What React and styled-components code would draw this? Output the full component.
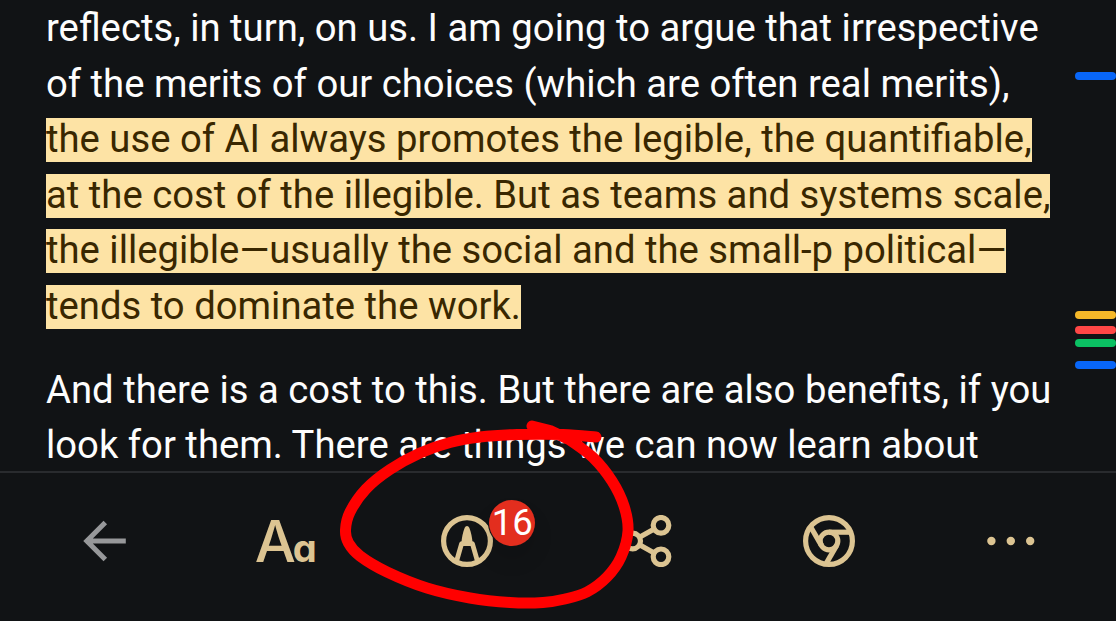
import { Fragment } from "react";
import { styled, createGlobalStyle } from "styled-components";

const GlobalStyle = createGlobalStyle`
  * {
    box-sizing: border-box;
  }

  body {
    margin: 0;
    background-color: #111315;
    overflow: hidden;
  }
`;

const Screen = styled.div`
  position: relative;
  display: flex;
  flex-direction: column;
  width: 1116px;
  height: 621px;
  overflow: hidden;
  background-color: #111315;
  font-family: Roboto, "Liberation Sans", sans-serif;
`;

const Reader = styled.main`
  display: flex;
  height: 471px;
  overflow: hidden;
`;

const Article = styled.article`
  flex: 1;
  padding: 1px 0 0 46px;
`;

const Paragraph = styled.p`
  margin: 0 0 28.2px;
  color: #fdfdfd;
  font-size: 38.26px;
  line-height: 55.6px;
  white-space: nowrap;
`;

const Highlight = styled.mark`
  padding-bottom: 1px;
  background: linear-gradient(transparent 1px, #fde3a5 1px);
  color: #392700;
`;

const Rail = styled.aside`
  width: 41px;
  display: flex;
  flex-direction: column;
`;

const Marker = styled.div`
  flex: none;
  height: 8px;
  margin-top: ${(props) => props.$gap}px;
  border-radius: 4px;
  background-color: ${(props) => props.$color};
`;

const Toolbar = styled.nav`
  display: grid;
  grid-template-columns: repeat(6, 1fr);
  height: 150px;
  padding: 0 15px 12px 13.4px;
  border-top: 2px solid #292b2e;
`;

const ToolButton = styled.button`
  display: flex;
  justify-content: center;
  align-items: center;
  padding: 0;
  border: none;
  background: none;
  color: ${(props) => (props.$muted ? "#97989a" : "#dcc492")};
`;

const IconBox = styled.span`
  position: relative;
  display: flex;
`;

const Badge = styled.span`
  position: absolute;
  top: -15px;
  left: 48.6px;
  width: 46px;
  height: 46px;
  border-radius: 50%;
  background-color: #e32e1e;
  box-shadow: 0 0 0 1px #111315, 0 14px 20px rgba(0, 0, 0, 0.12);
  color: #fff;
  font-family: Roboto, sans-serif;
  font-size: 36.5px;
  line-height: 45px;
  text-align: center;
`;

const FontLabel = styled.span`
  display: flex;
  align-items: baseline;
  padding-top: 7px;
  font-family: Inter, sans-serif;
  font-feature-settings: "cv11";
  line-height: 58px;
`;

const BigLetter = styled.span`
  margin-left: 1px;
  font-size: 58px;
  font-weight: 450;
`;

const SmallLetter = styled.span`
  margin-left: -3px;
  font-size: 38px;
  font-weight: 700;
`;

const Scribble = styled.svg`
  position: absolute;
  top: 0;
  left: 0;
  pointer-events: none;
`;

const paragraphs = [
  {
    id: "argue",
    lines: [
      { text: "reflects, in turn, on us. I am going to argue that irrespective" },
      { text: "of the merits of our choices (which are often real merits)," },
      {
        text: "the use of AI always promotes the legible, the quantifiable,",
        marked: true,
      },
      {
        text: "at the cost of the illegible. But as teams and systems scale,",
        marked: true,
      },
      {
        text: "the illegible—usually the social and the small-p political—",
        marked: true,
      },
      { text: "tends to dominate the work.", marked: true },
    ],
  },
  {
    id: "cost",
    lines: [
      { text: "And there is a cost to this. But there are also benefits, if you" },
      { text: "look for them. There are things we can now learn about" },
    ],
  },
];

const markers = [
  { gap: 71.5, color: "#0866f8" },
  { gap: 231.5, color: "#f5b829" },
  { gap: 7, color: "#ff4746" },
  { gap: 5, color: "#0bc163" },
  { gap: 14, color: "#0866f8" },
];

const loopPoints = [
  [570, 440], [593, 457.5], [612, 481], [624, 506], [628, 531], [621, 557],
  [607, 577], [587, 592], [565, 599], [543, 602.5], [510, 602.5], [470, 598],
  [427, 588], [387, 572], [360, 556], [348.5, 543], [345.5, 530], [350, 512],
  [366, 489], [390, 469.5], [420, 453], [450, 442.5], [480, 437],
  [517, 434.5], [563, 434.5], [596, 437],
];

// Catmull-Rom through the points, written as cubic segments
function smoothPath(points) {
  let d = "";
  for (let i = 0; i < points.length - 1; i++) {
    const p0 = points[i - 1] || points[i];
    const p1 = points[i];
    const p2 = points[i + 1];
    const p3 = points[i + 2] || p2;
    d += `C${p1[0] + (p2[0] - p0[0]) / 6} ${p1[1] + (p2[1] - p0[1]) / 6} `;
    d += `${p2[0] - (p3[0] - p1[0]) / 6} ${p2[1] - (p3[1] - p1[1]) / 6} `;
    d += `${p2[0]} ${p2[1]}`;
  }
  return d;
}

function BackIcon() {
  return (
    <svg width="44" height="42" fill="none" stroke="currentColor" strokeWidth="5">
      <path d="M43.8 21H5.8M23.3 2.5L4.8 21L23.3 39.5" />
    </svg>
  );
}

function PenIcon() {
  return (
    <svg width="52" height="52" fill="none" stroke="currentColor">
      <circle cx="26" cy="26" r="23.4" strokeWidth="5.2" />
      <path d="M15.6 46L20.6 28.6H31.4L36.4 46" strokeWidth="4.8" strokeLinejoin="round" />
      <path
        d="M20.4 29C20.6 23 22 17 23.7 12.8Q24.4 11 26 11Q27.6 11 28.3 12.8C30 17 31.4 23 31.6 29Z"
        fill="currentColor"
        stroke="none"
      />
    </svg>
  );
}

function ShareIcon() {
  return (
    <svg width="52" height="52" fill="none" stroke="currentColor" strokeWidth="5.2">
      <circle cx="10.7" cy="26" r="7.8" />
      <circle cx="39" cy="10.3" r="7.8" />
      <circle cx="39" cy="41.8" r="7.8" />
      <path d="M17.5 22.2L32.2 14M17.5 29.8L32.2 38" />
    </svg>
  );
}

function BrowserIcon() {
  return (
    <svg width="52" height="52" fill="none" stroke="currentColor" strokeWidth="5.2">
      <circle cx="26" cy="26" r="23.4" />
      <circle cx="26" cy="26" r="8.8" />
      {[0, 120, 240].map((angle) => (
        <path
          key={angle}
          d="M26 17.2H47"
          transform={`rotate(${angle} 26 26)`}
        />
      ))}
    </svg>
  );
}

function MoreIcon() {
  return (
    <svg width="50" height="10" fill="currentColor">
      <circle cx="6.4" cy="5" r="4.2" />
      <circle cx="25.8" cy="5" r="4.2" />
      <circle cx="45.2" cy="5" r="4.2" />
    </svg>
  );
}

function App() {
  return (
    <Screen>
      <GlobalStyle />
      <Reader>
        <Article>
          {paragraphs.map((paragraph) => (
            <Paragraph key={paragraph.id}>
              {paragraph.lines.map((line) => (
                <Fragment key={line.text}>
                  {line.marked ? <Highlight>{line.text}</Highlight> : line.text}
                  <br />
                </Fragment>
              ))}
            </Paragraph>
          ))}
        </Article>
        <Rail>
          {markers.map((marker, idx) => (
            <Marker key={idx} $gap={marker.gap} $color={marker.color} />
          ))}
        </Rail>
      </Reader>
      <Toolbar>
        <ToolButton $muted>
          <BackIcon />
        </ToolButton>
        <ToolButton>
          <FontLabel>
            <BigLetter>A</BigLetter>
            <SmallLetter>a</SmallLetter>
          </FontLabel>
        </ToolButton>
        <ToolButton>
          <IconBox>
            <PenIcon />
            <Badge>16</Badge>
          </IconBox>
        </ToolButton>
        <ToolButton>
          <ShareIcon />
        </ToolButton>
        <ToolButton>
          <BrowserIcon />
        </ToolButton>
        <ToolButton>
          <MoreIcon />
        </ToolButton>
      </Toolbar>
      <Scribble width="1116" height="621" fill="none">
        <path
          d={`M532 426L550 430.5L570 440${smoothPath(loopPoints)}`}
          stroke="#ff0000"
          strokeWidth="11"
          strokeLinecap="round"
          strokeLinejoin="round"
        />
      </Scribble>
    </Screen>
  );
}

export default App;
